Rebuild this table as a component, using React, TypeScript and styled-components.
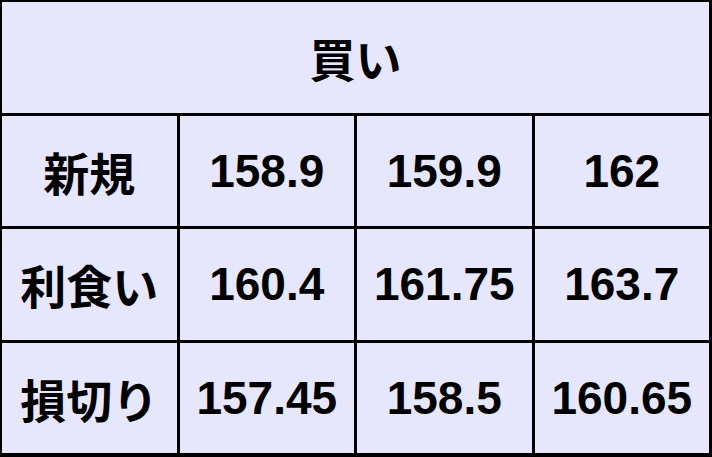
import React from 'react';
import styled, { createGlobalStyle } from 'styled-components';

interface Row {
	label: string;
	values: string[];
}

const rows: Row[] = [
	{ label: '新規', values: ['158.9', '159.9', '162'] },
	{ label: '利食い', values: ['160.4', '161.75', '163.7'] },
	{ label: '損切り', values: ['157.45', '158.5', '160.65'] },
];

function App() {
	return (
		<>
			<GlobalStyle />
			<PriceTable>
				<HeaderCell>買い</HeaderCell>
				{rows.map((row) => (
					<React.Fragment key={row.label}>
						<Cell>{row.label}</Cell>
						{row.values.map((value, i) => (
							<Cell key={i}>{value}</Cell>
						))}
					</React.Fragment>
				))}
			</PriceTable>
		</>
	);
}

const GlobalStyle = createGlobalStyle`
	html, body {
		margin: 0;
		padding: 0;
		background: #ffffff;
	}
`;

const PriceTable = styled.div`
	box-sizing: border-box;
	width: 712px;
	height: 457px;
	display: grid;
	grid-template-columns: repeat(4, 1fr);
	grid-template-rows: repeat(4, 1fr);
	gap: 3px;
	padding: 2px 3px 4px 2px;
	background: #000000;
`;

const Cell = styled.div`
	display: flex;
	align-items: center;
	justify-content: center;
	background: #e6e6fd;
	color: #000000;
	font-family: 'Liberation Sans', 'Noto Sans CJK JP', sans-serif;
	font-weight: bold;
	font-size: 46px;
`;

const HeaderCell = styled(Cell)`
	grid-column: 1 / span 4;
`;

export default App;
